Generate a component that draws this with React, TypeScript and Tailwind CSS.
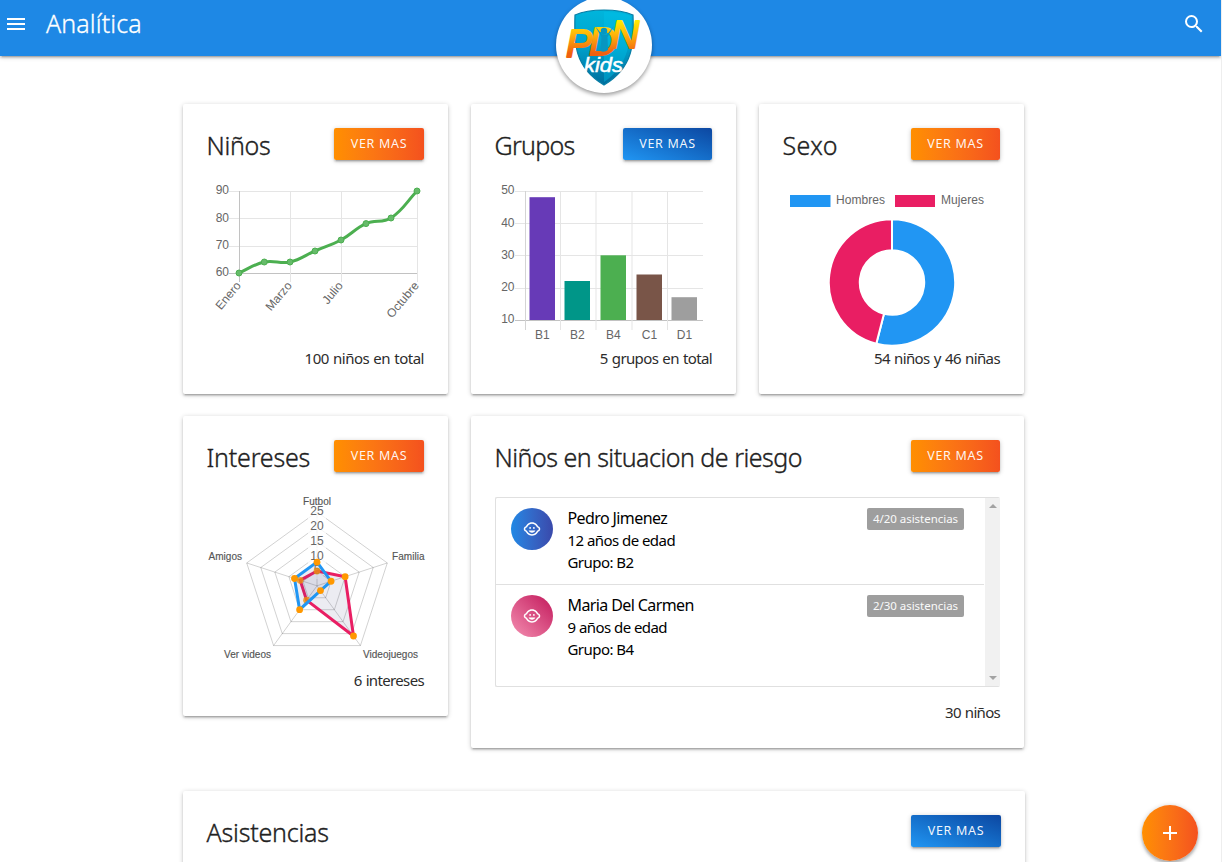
import type { ReactNode } from 'react';
import { MdAdd, MdChildCare, MdMenu, MdSearch } from 'react-icons/md';

type Pt = [number, number];

const SHADOW = 'shadow-[0_2px_2px_0_rgba(0,0,0,0.14),0_3px_1px_-2px_rgba(0,0,0,0.12),0_1px_5px_0_rgba(0,0,0,0.2)]';
const ORANGE = 'bg-linear-to-r from-[#ff8f00] to-[#f4511e]';
const BLUE = 'bg-linear-to-tr from-[#2196f3] to-[#0d47a1]';

function Button({ blue = false, wide = false }: { blue?: boolean; wide?: boolean }) {
  return (
    <button className={`h-8 shrink-0 rounded-xs text-[12.500px] leading-8 tracking-[0.7px] text-white/95 ${wide ? 'w-[90px]' : 'w-[89px]'} ${blue ? BLUE : ORANGE} ${SHADOW}`}>
      VER MAS
    </button>
  );
}

function Card({ title, track, blue, wide, footer, footTrack = 'tracking-[-0.5px]', className, children }: {
  title: string; track: string; blue?: boolean; wide?: boolean; footer?: string; footTrack?: string; className: string; children?: ReactNode;
}) {
  return (
    <section className={`flex flex-col rounded-xs bg-white px-6 pt-6 ${SHADOW} ${className}`}>
      <div className="flex h-8 items-start justify-between">
        <h2 className={`ml-[-0.500px] pt-px text-[25px] leading-8 font-light whitespace-nowrap text-[#212121] [-webkit-text-stroke:0.35px_#212121] ${track}`}>{title}</h2>
        <Button blue={blue} wide={wide} />
      </div>
      {children}
      {footer && <p className={`mt-[-1px] text-right text-[15px] leading-[22px] whitespace-nowrap text-[#2c2c2c] [word-spacing:0.8px] ${footTrack}`}>{footer}</p>}
    </section>
  );
}

const LINE: Pt[] = [[239, 273], [264.3, 262], [290, 262], [315, 251], [341, 240], [366, 223.6], [391, 218], [417, 191]];

function spline(pts: Pt[], t = 0.4) {
  const ctrl = pts.map((p, i) => {
    const a = pts[Math.max(i - 1, 0)];
    const b = pts[Math.min(i + 1, pts.length - 1)];
    const d1 = Math.hypot(p[0] - a[0], p[1] - a[1]);
    const d2 = Math.hypot(b[0] - p[0], b[1] - p[1]);
    const f1 = (t * d1) / (d1 + d2);
    const f2 = (t * d2) / (d1 + d2);
    return {
      before: [p[0] - f1 * (b[0] - a[0]), p[1] - f1 * (b[1] - a[1])],
      after: [p[0] + f2 * (b[0] - a[0]), p[1] + f2 * (b[1] - a[1])],
    };
  });
  return pts.map((p, i) => (i ? `C${ctrl[i - 1].after} ${ctrl[i].before} ${p}` : `M${p}`)).join(' ');
}

const CHART = "mt-4 mb-[2px] block shrink-0 overflow-visible font-['Liberation_Sans',sans-serif]";

function LineChart() {
  const months: [string, number][] = [['Enero', 239.5], ['Marzo', 290.5], ['Julio', 341.5], ['Octubre', 417.5]];
  return (
    <svg className={CHART} width="217" height="170" viewBox="207 176 217 170">
      {[90, 80, 70, 60].map((v, i) => (
        <g key={v}>
          <path d={`M229 ${[191.5, 218.5, 246.5, 273.5][i]}H418`} stroke={v === 60 ? '#c2c2c2' : '#e5e5e5'} />
          <text x="229" y={[194, 222, 249, 276][i]} textAnchor="end" fontSize="12" fill="#666">{v}</text>
        </g>
      ))}
      {months.map(([m, x], i) => (
        <g key={m}>
          <path d={`M${x} 191V282`} stroke={i ? '#e5e5e5' : '#c2c2c2'} />
          <text textAnchor="end" fontSize="12" fill="#666" transform={`translate(${x + 2} 286) rotate(-50)`}>{m}</text>
        </g>
      ))}
      <path d={spline(LINE)} fill="none" stroke="#4caf50" strokeWidth="3" />
      {LINE.map((p) => <circle key={p[0]} cx={p[0]} cy={p[1]} r="3" fill="#66bb6a" stroke="#4caf50" />)}
    </svg>
  );
}

function BarChart() {
  const bars: [string, number, number, string][] = [
    ['B1', 529.5, 197.2, '#673ab7'], ['B2', 564.5, 281, '#009688'], ['B4', 600.5, 255.3, '#4caf50'],
    ['C1', 636.5, 274.5, '#795548'], ['D1', 671.5, 297.2, '#9e9e9e'],
  ];
  return (
    <svg className={CHART} width="217" height="170" viewBox="495 176 217 170">
      {[50, 40, 30, 20, 10].map((v, i) => (
        <g key={v}>
          <path d={`M515 ${[191.5, 223.5, 255.5, 288.5, 320.5][i]}H703`} stroke={v === 10 ? '#c2c2c2' : '#e5e5e5'} />
          <text x="514.500" y={[194, 227, 259, 291, 323][i]} textAnchor="end" fontSize="12" fill="#666">{v}</text>
        </g>
      ))}
      {[525.5, 560.5, 596, 632, 667.5].map((x, i) => (
        <path key={x} d={`M${x} 191V330`} stroke={i ? '#e5e5e5' : '#d4d4d4'} />
      ))}
      {bars.map(([n, x, y, c]) => (
        <g key={n}>
          <rect x={x} y={y} width="25.500" height={320 - y} fill={c} />
          <text x={x + 12.9} y="339" textAnchor="middle" fontSize="12" fill="#666">{n}</text>
        </g>
      ))}
    </svg>
  );
}

function Doughnut() {
  const a = 0.54 * 2 * Math.PI;
  const at = (r: number) => `${892 + r * Math.sin(a)} ${282.5 - r * Math.cos(a)}`;
  const R = 63.2;
  const r = 32.2;
  return (
    <svg className={CHART} width="217" height="170" viewBox="783 176 217 170">
      <rect x="790" y="195" width="40.500" height="12" fill="#2196f3" />
      <text x="836" y="204" fontSize="12" fill="#666" textLength="49">Hombres</text>
      <rect x="895" y="195" width="40" height="12" fill="#e91e63" />
      <text x="941" y="204" fontSize="12" fill="#666" textLength="43">Mujeres</text>
      <g stroke="#fff" strokeWidth="2">
        <path fill="#2196f3" d={`M892 ${282.5 - R}A${R} ${R} 0 1 1 ${at(R)}L${at(r)}A${r} ${r} 0 1 0 892 ${282.5 - r}Z`} />
        <path fill="#e91e63" d={`M892 ${282.5 - R}A${R} ${R} 0 0 0 ${at(R)}L${at(r)}A${r} ${r} 0 0 1 892 ${282.5 - r}Z`} />
      </g>
    </svg>
  );
}

const polar = (v: number, i: number): Pt => {
  const r = (v / 25) * 73.9;
  return [317 + r * Math.sin((i * 2 * Math.PI) / 5), 585.8 - r * Math.cos((i * 2 * Math.PI) / 5)];
};
const ring = (vals: number[]) => vals.map((v, i) => polar(v, i).join()).join(' ');

function Radar() {
  const sets: [number[], string][] = [[[5, 10, 21, 6, 6], '#e91e63'], [[8, 5, 2, 10, 8], '#2196f3']];
  const labels: [string, number, number, number][] = [
    ['Futbol', 303, 505, 28], ['Familia', 392, 560, 32.5], ['Videojuegos', 363, 658, 55], ['Ver videos', 224, 658, 47], ['Amigos', 208.5, 560, 33.5],
  ];
  return (
    <svg className={CHART} width="217" height="180" viewBox="207 488 217 180">
      <g fill="none" stroke="#000" strokeOpacity=".18">
        {[5, 10, 15, 20, 25].map((v) => <polygon key={v} points={ring([v, v, v, v, v])} />)}
        {[0, 1, 2, 3, 4].map((i) => <path key={i} d={`M317 585.8L${polar(25, i)}`} />)}
      </g>
      {[5, 10, 15, 20, 25].map((v) => {
        const y = 585.8 - (v / 25) * 74.2;
        return (
          <g key={v}>
            <rect x={v === 5 ? 311 : 308} y={y - 8} width={v === 5 ? 12 : 18} height="16" fill="#fff" fillOpacity=".75" />
            <text x="317" y={y + 3.4} textAnchor="middle" fontSize="12" fill="#666">{v}</text>
          </g>
        );
      })}
      {labels.map(([t, x, y, w]) => <text key={t} x={x} y={y} fontSize="10" fill="#555" stroke="#555" strokeWidth=".15" textLength={w}>{t}</text>)}
      {sets.map(([vals, c]) => (
        <g key={c}>
          <polygon points={ring(vals)} fill="#404080" fillOpacity=".1" stroke={c} strokeWidth="3" />
          {vals.map((v, i) => <circle key={i} cx={polar(v, i)[0]} cy={polar(v, i)[1]} r="3.400" fill="#ff9800" fillOpacity={c === '#e91e63' && i !== 1 && i !== 2 ? 0.8 : 1} />)}
        </g>
      ))}
    </svg>
  );
}

function Child({ name, age, group, badge, tone, last }: { name: string; age: string; group: string; badge: string; tone: string; last?: boolean }) {
  return (
    <li className={`flex gap-[15px] pt-[10px] pr-5 pl-[15px] ${last ? 'h-[101px]' : 'h-[87px] border-b border-[#e0e0e0]'}`}>
      <span className={`flex size-[42px] shrink-0 items-center justify-center rounded-full text-white ${tone}`}>
        <MdChildCare size={18} />
      </span>
      <div className="mt-[-1px] ml-[-0.500px] flex-1 text-[15px] leading-[22px] tracking-[-0.55px] text-black">
        <p className="text-base leading-[22px] tracking-[-0.6px]">{name}</p>
        <p>{age}</p>
        <p>{group}</p>
      </div>
      <span className="h-[22px] w-[97px] rounded-xs bg-[#9e9e9e] text-center text-[11.500px] leading-[22px] tracking-[-0.03px] whitespace-nowrap text-[#fafafa]">{badge}</span>
    </li>
  );
}

function Logo() {
  return (
    <svg width="96" height="96" viewBox="0 0 96 96">
      <defs>
        <linearGradient id="shield" x1="0" y1="0" x2="0" y2="1">
          <stop offset="0" stopColor="#00b5dc" /><stop offset=".45" stopColor="#00a4ce" /><stop offset="1" stopColor="#006e9d" />
        </linearGradient>
        <linearGradient id="letters" x1="0" y1="22" x2="0" y2="60" gradientUnits="userSpaceOnUse">
          <stop offset="0" stopColor="#fff200" /><stop offset=".4" stopColor="#ffb60a" /><stop offset=".9" stopColor="#f0600f" />
        </linearGradient>
      </defs>
      <path d="M48 13C38 13 28 14 19 18C18 46 18 70 48 88C78 70 78 46 77 18C68 14 58 13 48 13Z" fill="url(#shield)" stroke="#087ea6" strokeWidth="1.200" />
      <path d="M48 15v70C71 69 75 48 75 19C68 16 58 15 48 15Z" fill="#00c4ea" fillOpacity=".4" />
      <g fontFamily="Liberation Sans, sans-serif" fontStyle="italic">
        <text x="10 33 55" y="60 58 51" fontSize="39" fill="url(#letters)" stroke="url(#letters)" strokeWidth="2" strokeLinejoin="round">PDN</text>
        <text x="28" y="75" fontSize="21" fill="#fff" stroke="#fff" strokeWidth=".5" textLength="39" lengthAdjust="spacingAndGlyphs">kids</text>
      </g>
      <circle cx="48" cy="34" r="3.200" fill="#0796c1" />
      <path d="M39 29L45.500 40L44.500 54Q48 56 52 53L51.500 40L58 29L51 37.500H46Z" fill="#0796c1" />
    </svg>
  );
}

export default function App() {
  return (
    <div className="h-[862px] w-[1222px] overflow-hidden border-r border-[#eee] bg-white font-['Noto_Sans','Open_Sans',sans-serif]">
      <header className={`relative flex h-14 items-center bg-[#1e88e5] text-white ${SHADOW}`}>
        <MdMenu className="ml-1 mt-[-8px]" size={24} />
        <h1 className="mt-[-11px] ml-[18px] flex-1 text-[25px] leading-8 font-light tracking-[0.1px] [-webkit-text-stroke:0.3px_white]">Analítica</h1>
        <MdSearch className="mt-[-8px] mr-[15px]" size={24} />
        <div className="absolute top-[-3px] left-[556px] size-24 rounded-full bg-white shadow-[0_2px_4px_rgba(0,0,0,0.4)]">
          <Logo />
        </div>
      </header>
      <main className="ml-[183px] w-[842px] pt-12">
        <div className="flex gap-[23px]">
          <Card title="Niños" track="tracking-[-0.3px]" wide footer="100 niños en total" footTrack="tracking-[-0.5px]" className="h-[290px] w-[265px]"><LineChart /></Card>
          <Card title="Grupos" track="tracking-[-0.7px]" blue footer="5 grupos en total" footTrack="tracking-[-0.62px]" className="h-[290px] w-[265px]"><BarChart /></Card>
          <Card title="Sexo" track="tracking-[0.4px]" footer="54 niños y 46 niñas" footTrack="tracking-[-0.6px]" className="h-[290px] w-[265px]"><Doughnut /></Card>
        </div>
        <div className="mt-[22px] flex items-start gap-[23px]">
          <Card title="Intereses" track="tracking-[-0.2px]" wide footer="6 intereses" footTrack="tracking-[-0.65px]" className="h-[300px] w-[265px]"><Radar /></Card>
          <Card title="Niños en situacion de riesgo" track="tracking-[-0.5px]" footer="30 niños" footTrack="tracking-[-0.7px]" className="h-[332px] w-[553px]">
            <div className="mt-[25px] mb-[15px] flex h-[190px] w-[505px] shrink-0 overflow-hidden rounded-xs border border-r-0 border-[#e0e0e0]">
              <ul className="w-[488px]">
                <Child name="Pedro Jimenez" age="12 años de edad" group="Grupo: B2" badge="4/20 asistencias" tone="bg-linear-to-r from-[#1e88e5] to-[#3949ab]" />
                <Child name="Maria Del Carmen" age="9 años de edad" group="Grupo: B4" badge="2/30 asistencias" tone="bg-linear-[45deg] from-[#f48fb1] to-[#c2185b]" last />
              </ul>
              <div className="ml-px flex w-[15px] flex-col items-center justify-between bg-[#f1f1f1] py-[6px]">
                <svg width="8" height="4"><path d="M0 4L4 0L8 4Z" fill="#a3a3a3" /></svg>
                <svg width="8" height="4"><path d="M0 0H8L4 4Z" fill="#a3a3a3" /></svg>
              </div>
            </div>
          </Card>
        </div>
        <div className="mt-[43px]">
          <Card title="Asistencias" track="tracking-[-0.2px]" blue wide className="h-[290px] w-[842px]" />
        </div>
      </main>
      <button className={`fixed top-[805px] left-[1142px] flex size-14 items-center justify-center rounded-full text-white shadow-[0_3px_3px_rgba(0,0,0,0.2),0_1px_5px_rgba(0,0,0,0.25)] ${ORANGE}`}>
        <MdAdd size={24} />
      </button>
    </div>
  );
}
